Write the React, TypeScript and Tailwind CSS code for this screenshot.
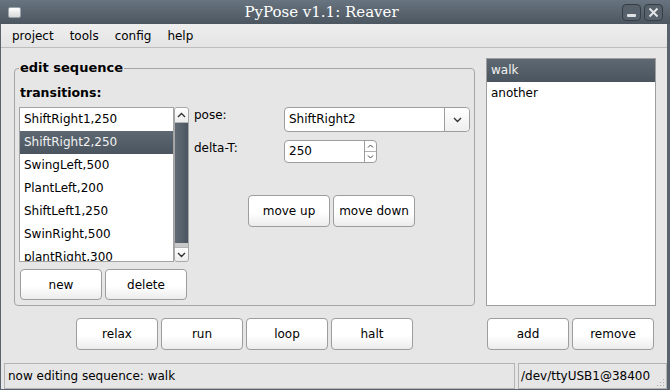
import React from "react";

const transitions = [
  "ShiftRight1,250",
  "ShiftRight2,250",
  "SwingLeft,500",
  "PlantLeft,200",
  "ShiftLeft1,250",
  "SwinRight,500",
  "plantRight,300",
];

const Btn = ({ label, h = "h-[32px]" }: { label: string; h?: string }) => (
  <button
    className={`w-[82px] ${h} rounded-[4px] border border-[#9d9d9d] bg-linear-to-b from-white from-55% to-[#ececec] text-[12px] text-black leading-none`}
  >
    {label}
  </button>
);

const Chevron = ({ up = false, className = "" }: { up?: boolean; className?: string }) => (
  <svg width="9" height="6" viewBox="0 0 9 6" className={className}>
    <path
      d={up ? "M1 5 L4.5 1.5 L8 5" : "M1 1 L4.5 4.5 L8 1"}
      fill="none"
      stroke="#333"
      strokeWidth="1.4"
    />
  </svg>
);

export default function App() {
  return (
    <div className="w-[670px] h-[390px] flex flex-col bg-[#e6e6e6] overflow-hidden font-['DejaVu_Sans',sans-serif] text-black">
      {/* title bar */}
      <div className="h-[24px] shrink-0 flex items-center bg-linear-to-b from-[#68747f] to-[#4c5660] pl-[8px] pr-[7px]">
        <div className="w-[13px] h-[11px] rounded-[2px] border border-[#9aa3ab] bg-linear-to-b from-white to-[#d8d8d8]" />
        <div className="flex-1 text-center text-[15px] text-white font-['DejaVu_Serif',serif] leading-none">
          PyPose v1.1: Reaver
        </div>
        <div className="flex gap-[3px]">
          <div className="w-[19px] h-[17px] rounded-[4px] border border-[#353d45] bg-[#56616b] flex items-end justify-center pb-[3px]">
            <div className="w-[9px] h-[3px] bg-[#dfe3e6] rounded-[1px]" />
          </div>
          <div className="w-[19px] h-[17px] rounded-[4px] border border-[#353d45] bg-[#56616b] flex items-center justify-center">
            <svg width="11" height="11" viewBox="0 0 11 11">
              <path d="M1.5 1.5 L9.5 9.5 M9.5 1.5 L1.5 9.5" stroke="#e3e6e9" strokeWidth="2" />
            </svg>
          </div>
        </div>
      </div>

      <div className="flex-1 flex flex-col border-l border-r-[3px] border-b border-[#58636d]">
        {/* menu bar */}
        <div className="h-[24px] shrink-0 flex items-center gap-[16px] pl-[11px] border-b border-[#bdbdbd] bg-linear-to-b from-[#eeeeee] to-[#e4e4e4] text-[12px]">
          <span>project</span>
          <span>tools</span>
          <span>config</span>
          <span>help</span>
        </div>

        {/* main */}
        <div className="flex-1 flex">
          {/* left column */}
          <div className="ml-[13px] w-[460px] flex flex-col">
            <fieldset className="mt-[12px] h-[246px] border border-[#a5a5a5] rounded-[4px] px-[4px]">
              <legend className="px-[1px] text-[13px] font-bold leading-[16px]">edit sequence</legend>
              <div className="mt-[9px] ml-[1px] text-[12.5px] font-bold leading-[16px]">transitions:</div>
              <div className="mt-[6px] flex">
                <div className="w-[170px] flex flex-col">
                  <div className="h-[155px] flex">
                    <div className="w-[155px] border border-[#a3a3a3] bg-white overflow-hidden text-[12px]">
                      {transitions.map((t, i) => (
                        <div
                          key={t}
                          className={`h-[23px] leading-[23px] pl-[4px] ${
                            i === 1 ? "bg-linear-to-b from-[#5d6873] to-[#4b555f] text-[#f2f2f2]" : ""
                          }`}
                        >
                          {t}
                        </div>
                      ))}
                    </div>
                    <div className="w-[15px] flex flex-col border border-[#a8a8a8] rounded-[3px] overflow-hidden bg-[#c9c9c9]">
                      <div className="h-[15px] bg-linear-to-b from-white to-[#ececec] flex items-center justify-center border-b border-[#b5b5b5]">
                        <Chevron up />
                      </div>
                      <div className="h-[120px] bg-linear-to-r from-[#606b76] via-[#56616b] to-[#4b555f]" />
                      <div className="flex-1" />
                      <div className="h-[14px] bg-linear-to-b from-white to-[#ececec] flex items-center justify-center border-t border-[#b5b5b5]">
                        <Chevron />
                      </div>
                    </div>
                  </div>
                  <div className="mt-[7px] pl-[1px] flex gap-[3px]">
                    <Btn label="new" h="h-[31px]" />
                    <Btn label="delete" h="h-[31px]" />
                  </div>
                </div>

                <div className="ml-[5px] flex flex-col text-[12px]">
                  <div className="h-[25px] flex">
                    <div className="w-[90px] leading-[16px]">pose:</div>
                    <div className="w-[186px] h-[25px] flex border border-[#9d9d9d] rounded-[4px] bg-white">
                      <div className="flex-1 pl-[4px] leading-[23px]">ShiftRight2</div>
                      <div className="w-[25px] border-l border-[#9d9d9d] flex items-center justify-center bg-linear-to-b from-white to-[#efefef] rounded-r-[4px]">
                        <Chevron />
                      </div>
                    </div>
                  </div>
                  <div className="mt-[8px] h-[23px] flex">
                    <div className="w-[90px] leading-[16px]">delta-T:</div>
                    <div className="w-[93px] h-[23px] flex border border-[#9d9d9d] rounded-[4px] bg-white">
                      <div className="flex-1 pl-[4px] leading-[21px]">250</div>
                      <div className="w-[12px] border-l border-[#9d9d9d] flex flex-col">
                        <div className="flex-1 flex items-center justify-center border-b border-[#b0b0b0]">
                          <svg width="7" height="4" viewBox="0 0 7 4">
                            <path d="M1 3.5 L3.5 1 L6 3.5" fill="none" stroke="#444" strokeWidth="1" />
                          </svg>
                        </div>
                        <div className="flex-1 flex items-center justify-center">
                          <svg width="7" height="4" viewBox="0 0 7 4">
                            <path d="M1 0.5 L3.5 3 L6 0.5" fill="none" stroke="#444" strokeWidth="1" />
                          </svg>
                        </div>
                      </div>
                    </div>
                  </div>
                  <div className="mt-[32px] ml-[54px] flex gap-[3px]">
                    <Btn label="move up" />
                    <Btn label="move down" />
                  </div>
                </div>
              </div>
            </fieldset>

            <div className="mt-[12px] pl-[62px] flex gap-[3px]">
              <Btn label="relax" />
              <Btn label="run" />
              <Btn label="loop" />
              <Btn label="halt" />
            </div>
          </div>

          {/* right column */}
          <div className="ml-[12px] w-[170px] flex flex-col">
            <div className="mt-[10px] h-[248px] border border-[#9e9e9e] bg-white text-[12px]">
              <div className="h-[23px] leading-[23px] pl-[4px] bg-linear-to-b from-[#5d6873] to-[#4b555f] text-[#f2f2f2]">
                walk
              </div>
              <div className="h-[23px] leading-[23px] pl-[4px]">another</div>
            </div>
            <div className="mt-[12px] pl-[1px] flex gap-[3px]">
              <Btn label="add" />
              <Btn label="remove" />
            </div>
          </div>
        </div>

        {/* status bar */}
        <div className="h-[26px] shrink-0 flex gap-[3px] pl-[3px] text-[12px]">
          <div className="w-[511px] h-full border border-[#b3b3b3] pl-[3px] leading-[24px]">
            now editing sequence: walk
          </div>
          <div className="flex-1 h-full border border-[#b3b3b3] pl-[2px] leading-[24px] relative overflow-hidden whitespace-nowrap">
            /dev/ttyUSB1@38400
            <svg width="10" height="10" viewBox="0 0 10 10" className="absolute right-[1px] bottom-[1px]">
              <g fill="#b0b0b0">
                <rect x="8" y="2" width="1" height="1" />
                <rect x="5" y="5" width="1" height="1" />
                <rect x="8" y="5" width="1" height="1" />
                <rect x="2" y="8" width="1" height="1" />
                <rect x="5" y="8" width="1" height="1" />
                <rect x="8" y="8" width="1" height="1" />
              </g>
            </svg>
          </div>
        </div>
      </div>
    </div>
  );
}
